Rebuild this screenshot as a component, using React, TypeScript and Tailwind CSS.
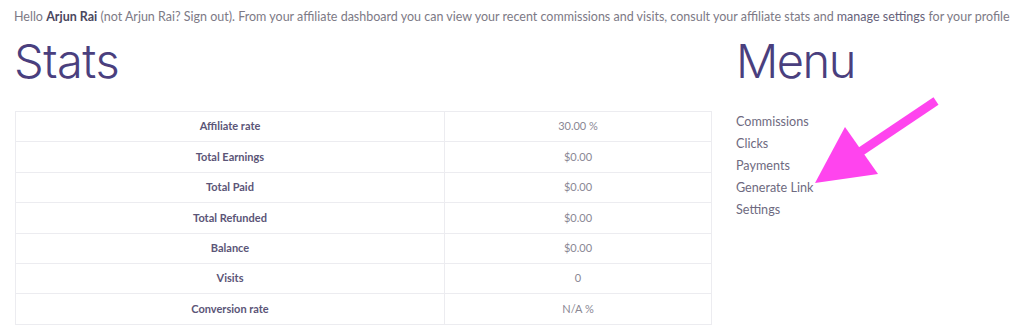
const STATS = [
  { label: "Affiliate rate", value: "30.00 %" },
  { label: "Total Earnings", value: "$0.00" },
  { label: "Total Paid", value: "$0.00" },
  { label: "Total Refunded", value: "$0.00" },
  { label: "Balance", value: "$0.00" },
  { label: "Visits", value: "0" },
  { label: "Conversion rate", value: "N/A %" },
];

const MENU = ["Commissions", "Clicks", "Payments", "Generate Link", "Settings"];

export default function App() {
  return (
    <div className="relative h-[326px] w-[1024px] overflow-hidden bg-white font-['Lato',sans-serif] text-[#7d7a86]">
      {/* Greeting */}
      <p className="pl-[14px] pt-[8px] text-[12.5px] leading-[17px] whitespace-nowrap">
        Hello <b className="font-bold text-[#4b4760]">Arjun Rai</b> (not Arjun Rai? Sign out). From your affiliate dashboard you can view your recent commissions and visits, consult your affiliate stats and{" "}
        <span className="text-[#66627a]">manage settings</span> for your profile
      </p>

      <div className="flex gap-[24px] pl-[14px]">
        {/* Stats */}
        <div className="w-[698px]">
          <h2 className="mt-[8px] font-['Inter',sans-serif] text-[47px] font-light leading-[56px] tracking-[-0.5px] text-[#4a3f7e]">Stats</h2>
          <table className="mt-[22px] ml-[1px] w-[697px] border-collapse border border-[#ececf0] text-[11px]">
            <tbody>
              {STATS.map((s) => (
                <tr key={s.label} className="h-[30.4px] border-b border-[#ececf0]">
                  <td className="w-[429px] border-r border-[#ececf0] text-center font-bold text-[#5b5577]">{s.label}</td>
                  <td className="text-center text-[#8a8794]">{s.value}</td>
                </tr>
              ))}
            </tbody>
          </table>
        </div>

        {/* Menu */}
        <div>
          <h2 className="mt-[8px] font-['Inter',sans-serif] text-[47px] font-light leading-[56px] tracking-[-1.5px] text-[#4a3f7e]">Menu</h2>
          <ul className="mt-[22px] flex flex-col text-[12.6px] leading-[22px] text-[#6e6a80]">
            {MENU.map((m) => (
              <li key={m}>{m}</li>
            ))}
          </ul>
        </div>
      </div>

      {/* Annotation arrow */}
      <svg className="absolute left-0 top-0" width="1024" height="326" viewBox="0 0 1024 326">
        <line x1="936" y1="101" x2="860" y2="152" stroke="#ff44ee" strokeWidth="9" />
        <polygon points="815,183 845,127 878,174" fill="#ff44ee" />
      </svg>
    </div>
  );
}
